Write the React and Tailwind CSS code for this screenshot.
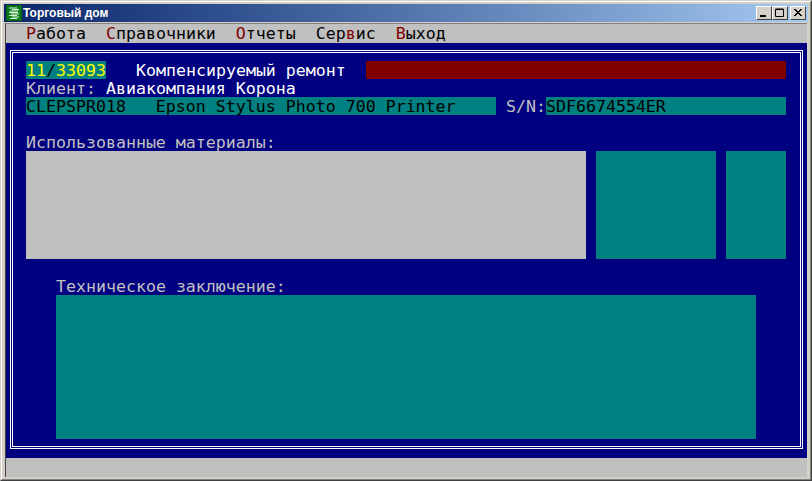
function Ch({ children }) {
  return <span className="text-[#800000]">{children}</span>;
}

function CaptionButton({ children, className = "" }) {
  return (
    <div className={`w-4 h-[14px] bg-[#d4d0c8] border-t border-l border-white border-r border-b border-r-[#404040] border-b-[#404040] flex items-center justify-center ${className}`}>
      {children}
    </div>
  );
}

export default function App() {
  return (
    <div className="w-[812px] h-[481px] overflow-hidden bg-[#d4d0c8] border border-t-[#d4d0c8] border-l-[#d4d0c8] border-r-[#404040] border-b-[#404040] flex flex-col font-['DejaVu_Sans_Mono',monospace] text-[16.6px] leading-[18px]">
      <div className="flex-1 min-h-0 border border-t-white border-l-white border-r-[#808080] border-b-[#808080] p-[2px] flex flex-col">
        {/* Title bar */}
        <div className="h-[18px] shrink-0 flex items-center bg-gradient-to-r from-[#0a246a] to-[#a6caf0] pl-[2px] pr-[1px]">
          <svg width="16" height="16" viewBox="0 0 16 16" className="shrink-0">
            <rect width="16" height="16" fill="#0a7a1a" />
            <rect x="0.5" y="0.5" width="15" height="15" fill="none" stroke="#0c5c14" />
            <path d="M3 3h8M6 4.5h7M4 6h8M3 7.5h9M5 9h8M3 10.5h8M6 12h7M4 13.5h7" stroke="#d8f5d8" strokeWidth="1" fill="none" />
          </svg>
          <span className="ml-[1px] font-['Liberation_Sans',sans-serif] font-bold text-[12px] leading-[18px] text-white">Торговый дом</span>
          <div className="ml-auto flex items-center mr-[1px]">
            <CaptionButton>
              <svg width="10" height="10" viewBox="0 0 10 10"><rect x="1" y="7" width="6" height="2" fill="#000" /></svg>
            </CaptionButton>
            <CaptionButton>
              <svg width="10" height="10" viewBox="0 0 10 10"><path d="M0.5 1.5h8v7h-8z M0.5 1h8" stroke="#000" fill="none" /></svg>
            </CaptionButton>
            <CaptionButton className="ml-[2px]">
              <svg width="10" height="10" viewBox="0 0 10 10"><path d="M1 1l7 7M2 1l7 7M8 1l-7 7M9 1l-7 7" stroke="#000" fill="none" /></svg>
            </CaptionButton>
          </div>
        </div>
        {/* Client area */}
        <div className="flex-1 min-h-0 mt-[1px] mx-[1px] flex flex-col border-t border-l border-[#404040] border-t-[#808080]">
          {/* Menu */}
          <div className="h-[19px] shrink-0 bg-[#c0c0c0] text-black pl-5 pt-[1px] flex gap-5 whitespace-pre">
            <span><Ch>Р</Ch>абота</span>
            <span><Ch>С</Ch>правочники</span>
            <span><Ch>О</Ch>тчеты</span>
            <span>Сер<Ch>в</Ch>ис</span>
            <span><Ch>В</Ch>ыход</span>
          </div>
          {/* Blue screen */}
          <div className="flex-1 min-h-0 bg-[#000080] px-1 pt-[7px] pb-2">
            <div className="h-[399px] w-[793px] border-[3px] border-double border-white pl-[13px] pr-[14px] pt-2">
              <div className="h-[18px] flex whitespace-pre text-white">
                <span className="pt-[1px] bg-[#008080] text-[#ffff00] w-20">11<span className="text-black">/</span>33093</span>
                <span className="pt-[1px] ml-[30px] w-[230px]">Компенсируемый ремонт</span>
                <div className="flex-1 bg-[#800000]" />
              </div>
              <div className="h-[18px] pt-[1px] whitespace-pre text-white">
                <span className="text-[#c0c0c0]">Клиент: </span>Авиакомпания Корона
              </div>
              <div className="h-[18px] flex whitespace-pre">
                <span className="pt-[1px] w-[470px] bg-[#008080] text-black">CLEPSPR018   Epson Stylus Photo 700 Printer</span>
                <span className="pt-[1px] ml-2.5 text-[#c0c0c0]">S/N:</span>
                <span className="pt-[1px] flex-1 bg-[#008080] text-black">SDF6674554ER</span>
              </div>
              <div className="mt-[18px] h-[18px] pt-[1px] text-[#c0c0c0] whitespace-pre">Использованные материалы:</div>
              <div className="h-[108px] flex gap-2.5">
                <div className="w-[560px] bg-[#c0c0c0]" />
                <div className="w-[120px] bg-[#008080]" />
                <div className="w-[60px] bg-[#008080]" />
              </div>
              <div className="mt-[18px] ml-[30px] h-[18px] pt-[1px] text-[#c0c0c0] whitespace-pre">Техническое заключение:</div>
              <div className="ml-[30px] w-[700px] h-[144px] bg-[#008080]" />
            </div>
          </div>
          {/* Status */}
          <div className="h-[19px] shrink-0 bg-[#c0c0c0]" />
        </div>
      </div>
    </div>
  );
}
